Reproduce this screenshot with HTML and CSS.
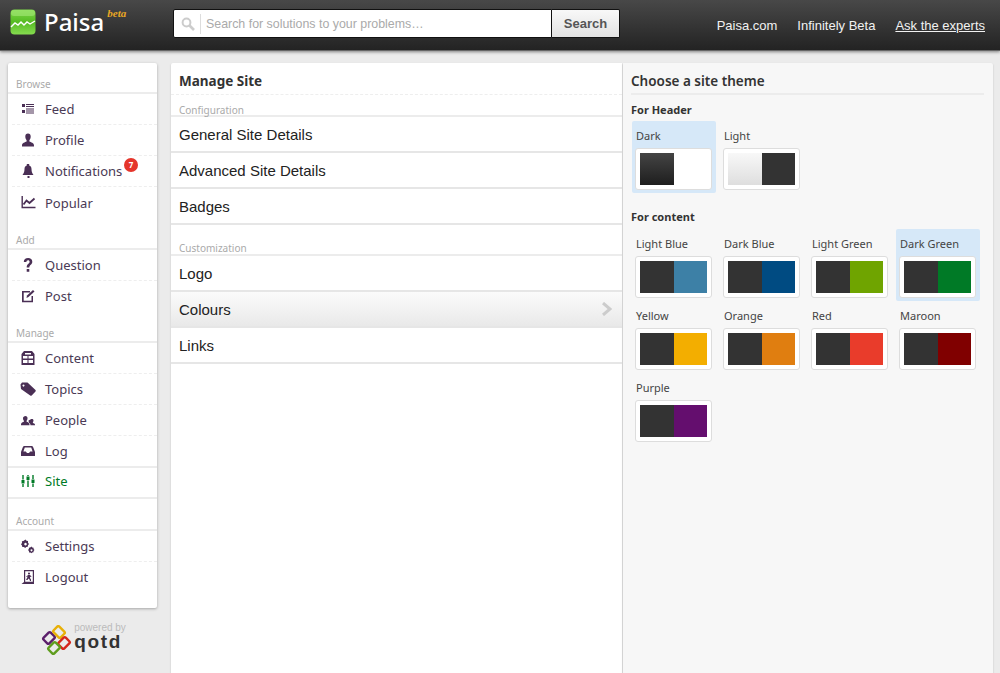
FILE: index.html
```html
<!DOCTYPE html>
<html lang="en">
<head>
  <meta charset="UTF-8">
  <title>Paisa - Manage Site</title>
  <link rel="stylesheet" href="styles.css">
</head>
<body>

  <header class="topbar">
    <a class="brand">
      <svg class="brand-icon" width="26" height="26" viewBox="0 0 26 26">
        <defs>
          <linearGradient id="logoGreen" x1="0" y1="0" x2="0" y2="1">
            <stop offset="0" stop-color="#7fd84a"/>
            <stop offset="0.5" stop-color="#55bb22"/>
            <stop offset="1" stop-color="#86dc50"/>
          </linearGradient>
        </defs>
        <rect x="0.5" y="0.5" width="25" height="25" rx="4" fill="url(#logoGreen)"/>
        <rect x="1" y="1" width="24" height="6" rx="3" fill="#a5e878" opacity="0.6"/>
        <path d="M1 18 L5 14 L8 16 L11 13 L14 16 L17 13 L20 15 L25 12" fill="none" stroke="#fff" stroke-width="1.4"/>
      </svg>
      <span class="brand-name">Paisa</span>
      <span class="brand-beta">beta</span>
    </a>
    <form class="search">
      <span class="search-field">
        <svg class="search-icon" width="14" height="14" viewBox="0 0 14 14">
          <circle cx="5.5" cy="5.5" r="3.9" fill="none" stroke="#ccc" stroke-width="2"/>
          <path d="M8.5 8.5 L13 13" stroke="#ccc" stroke-width="2.6"/>
        </svg>
        <input class="search-input" type="text" placeholder="Search for solutions to your problems…">
      </span>
      <button class="search-btn" type="button">Search</button>
    </form>
    <nav class="toplinks">
      <a>Paisa.com</a>
      <a>Infinitely Beta</a>
      <a class="underlined">Ask the experts</a>
    </nav>
  </header>

  <div class="page">
    <div class="left">
      <aside class="sidebar">
        <h4 class="nav-title">Browse</h4>
        <ul class="nav">
          <li><svg class="ico" viewBox="0 0 16 16"><path d="M2 3h3v3H2zM2 9h3v3H2zM6 3h8v1H6zM6 5h8v1H6zM6 7.500h8v1H6zM6 9.500h8v1H6zM6 11.500h8v1H6z"/></svg>Feed</li>
          <li><svg class="ico" viewBox="0 0 16 16"><path d="M8 1.500c1.800 0 2.700 1.300 2.700 3 0 1.600-.7 3-1.300 3.700v1.300c1.500.8 4.600 1.300 4.600 4v1H2v-1c0-2.700 3.100-3.200 4.600-4V8.200C6 7.500 5.300 6.100 5.300 4.500c0-1.700.9-3 2.700-3z"/></svg>Profile</li>
          <li><svg class="ico" viewBox="0 0 16 16"><path d="M7.300 1h1.400v1.600c1.500.5 2.300 1.800 2.300 3.400 0 3 .8 4.500 2 6H2c1.200-1.500 2-3 2-6 0-1.600.8-2.900 2.300-3.400V1zM7 13h2v2H7z" transform="translate(0.500 0)"/></svg>Notifications<span class="badge">7</span></li>
          <li><svg class="ico" viewBox="0 0 16 16"><path d="M1.500 2h1.400v10.800h12.600v1.400h-14z"/><path d="M3.500 10.500 L6.500 6.500 L9.500 9 L14.500 4.500" fill="none" stroke="#4a2f55" stroke-width="1.800"/></svg>Popular</li>
        </ul>
        <h4 class="nav-title">Add</h4>
        <ul class="nav">
          <li><svg class="ico" viewBox="0 0 16 16"><path d="M3.800 5c0-2.500 1.800-3.900 4.300-3.900 2.400 0 4.200 1.400 4.200 3.600 0 3-3 3.100-3 5.800H6.700c0-3.700 2.900-3.800 2.900-5.700 0-.9-.6-1.500-1.500-1.500-1.100 0-1.700.7-1.700 1.700zM6.700 12h2.600v2.700H6.700z"/></svg>Question</li>
          <li><svg class="ico" viewBox="0 0 16 16"><path d="M2 3h8v1.500H3.700v8.300h7.800V8H13v6.300H2z"/><path d="M7 7.500l6-5.500 1.500 1.500-6 5.500L6.500 10z"/></svg>Post</li>
        </ul>
        <h4 class="nav-title">Manage</h4>
        <ul class="nav">
          <li><svg class="ico" viewBox="0 0 16 16"><path fill-rule="evenodd" d="M4 1h8l2.500 3v11h-13V4zM3 6v2.500h4.500V6zM8.500 6v2.500H13V6zM3 10v3h4.500v-3zM8.500 10v3H13v-3zM5 3v1.500h6V3z"/></svg>Content</li>
          <li><svg class="ico" viewBox="0 0 16 16"><path fill-rule="evenodd" d="M.5 3.500L2 1.500h5.500l8 7.500c.4.400.4 1 0 1.400l-3.800 4c-.5.500-1.100.5-1.500.1L1 8zM3.500 3.500a1 1 0 1 0 .01 0z"/></svg>Topics</li>
          <li><svg class="ico" viewBox="0 0 16 16"><path d="M5.500 4c1.300 0 2 1 2 2.200 0 1-.4 2-.9 2.500v1c1 .5 2.900.8 2.900 2.700v.8H1v-.8c0-1.900 1.900-2.200 2.900-2.700v-1C3.400 8.200 3 7.200 3 6.200 3 5 4.200 4 5.500 4z"/><path d="M12 7c1 0 1.500.7 1.500 1.600 0 .7-.3 1.300-.6 1.700v.7c.7.300 2.100.5 2.100 1.800v.5h-4.500c0-1.300-.5-2-1.500-2.500v-.5c-.3-.4-.5-1-.5-1.700C10 7.700 11 7 12 7z"/></svg>People</li>
          <li><svg class="ico" viewBox="0 0 16 16"><path fill-rule="evenodd" d="M4.500 3h7c1 0 1.500.7 1.800 1.500L15 9v4H1V9l1.700-4.500C3 3.700 3.500 3 4.500 3zM4.800 4.500L3.400 8.500h2.400L7 10h2l1.200-1.500h2.400l-1.400-4z"/></svg>Log</li>
          <li class="current"><svg class="ico" viewBox="0 0 16 16"><path d="M2.300 2h1.400v4.500H2.300zM1.500 7h3v3.500h-3zM2.300 11h1.400v3H2.300zM7.300 2h1.400v1H7.300zM6.500 3.500h3V7h-3zM7.300 7.500h1.400V14H7.300zM12.300 2h1.400v4h-1.400zM11.500 6.500h3V10h-3zM12.300 10.500h1.400V14h-1.400z"/></svg>Site</li>
        </ul>
        <h4 class="nav-title">Account</h4>
        <ul class="nav">
          <li><svg class="ico" viewBox="0 0 16 16"><path fill-rule="evenodd" d="M5.500 1.500l1 1.200 1.500.3v1.800l1 1.200-1 1.300-.2 1.500-1.600.1-1 1.100-1.300-.9-1.600-.1-.3-1.600L1 6.200l1-1.300-.1-1.600 1.500-.4zM5.500 4.800a1.300 1.300 0 1 0 .01 0zM11.500 8.500l.8 1 1.300.2v1.300l.9 1-.9 1-.1 1.300-1.300.1-.8.9-1-.8-1.300-.1-.2-1.300-.9-1 .9-1v-1.300l1.300-.3zM11.500 11.200a1 1 0 1 0 .01 0z"/></svg>Settings</li>
          <li><svg class="ico" viewBox="0 0 16 16"><path fill-rule="evenodd" d="M4 1h10v14H1.500l2.500-2zM5.200 2.200v10.600h7.600V2.200zM9 3.500a1 1 0 1 1-.01 0zM8 6h2l1.500 1.500-.7.700L10 7.500V9l1 1.500v1.500h-1l-.5-1.500-1-1-1 1.500H6l1.500-3V7.200L7 8H6z"/></svg>Logout</li>
        </ul>
      </aside>

      <div class="powered">
        <svg class="qotd-mark" width="32" height="32" viewBox="0 0 32 32" fill="none" stroke-width="2.400">
          <rect x="3" y="9" width="10" height="8" rx="1.500" transform="rotate(-45 8 13)" stroke="#5c1f6b"/>
          <rect x="13" y="3" width="10" height="8" rx="1.500" transform="rotate(45 18 7)" stroke="#e8b008"/>
          <rect x="18" y="14" width="10" height="8" rx="1.500" transform="rotate(-45 23 18)" stroke="#d5261c"/>
          <rect x="8" y="19" width="10" height="8" rx="1.500" transform="rotate(-45 13 23)" stroke="#5f9d1e"/>
        </svg>
        <div class="powered-text">
          <span class="powered-by">powered by</span>
          <span class="qotd">qotd</span>
        </div>
      </div>
    </div>

    <main class="manage">
      <h3 class="panel-title">Manage Site</h3>
      <h4 class="menu-title">Configuration</h4>
      <ul class="menu">
        <li>General Site Details</li>
        <li>Advanced Site Details</li>
        <li>Badges</li>
      </ul>
      <h4 class="menu-title spaced">Customization</h4>
      <ul class="menu">
        <li>Logo</li>
        <li class="active">Colours
          <svg class="chevron" width="10" height="14" viewBox="0 0 10 14"><path d="M1 1 L8 7 L1 13" fill="none" stroke="#ccc" stroke-width="3"/></svg>
        </li>
        <li>Links</li>
      </ul>
    </main>

    <section class="themes">
      <h3 class="themes-title">Choose a site theme</h3>
      <h5 class="themes-sub">For Header</h5>
      <div class="theme-grid">
        <div class="theme selected">
          <div class="theme-name">Dark</div>
          <div class="swatch"><span class="grad-dark"></span><span class="white"></span></div>
        </div>
        <div class="theme">
          <div class="theme-name">Light</div>
          <div class="swatch"><span class="grad-light"></span><span class="base"></span></div>
        </div>
      </div>
      <h5 class="themes-sub content-sub">For content</h5>
      <div class="theme-grid">
        <div class="theme">
          <div class="theme-name">Light Blue</div>
          <div class="swatch"><span class="base"></span><span class="c-lightblue"></span></div>
        </div>
        <div class="theme">
          <div class="theme-name">Dark Blue</div>
          <div class="swatch"><span class="base"></span><span class="c-darkblue"></span></div>
        </div>
        <div class="theme">
          <div class="theme-name">Light Green</div>
          <div class="swatch"><span class="base"></span><span class="c-lightgreen"></span></div>
        </div>
        <div class="theme selected">
          <div class="theme-name">Dark Green</div>
          <div class="swatch"><span class="base"></span><span class="c-darkgreen"></span></div>
        </div>
        <div class="theme">
          <div class="theme-name">Yellow</div>
          <div class="swatch"><span class="base"></span><span class="c-yellow"></span></div>
        </div>
        <div class="theme">
          <div class="theme-name">Orange</div>
          <div class="swatch"><span class="base"></span><span class="c-orange"></span></div>
        </div>
        <div class="theme">
          <div class="theme-name">Red</div>
          <div class="swatch"><span class="base"></span><span class="c-red"></span></div>
        </div>
        <div class="theme">
          <div class="theme-name">Maroon</div>
          <div class="swatch"><span class="base"></span><span class="c-maroon"></span></div>
        </div>
        <div class="theme">
          <div class="theme-name">Purple</div>
          <div class="swatch"><span class="base"></span><span class="c-purple"></span></div>
        </div>
      </div>
    </section>
  </div>

</body>
</html>
```

FILE: styles.css
```css
* {
  box-sizing: border-box;
}
html, body {
  height: 100%;
}
body {
  margin: 0;
  background-color: #ebebeb;
  font-family: "Noto Sans", sans-serif;
  overflow: hidden;
}
ul {
  list-style: none;
  margin: 0;
  padding: 0;
}
h3, h4, h5 {
  margin: 0;
}

/* top bar */
.topbar {
  height: 51px;
  display: flex;
  align-items: flex-start;
  background: linear-gradient(#484848, #232323);
  box-shadow: 0 1px 3px rgba(0, 0, 0, 0.45);
  border-bottom: 1px solid #666;
}
.brand {
  display: flex;
  width: 173px;
  padding: 9px 0 0 10px;
  flex: none;
}
.brand-icon {
  flex: none;
}
.brand-name {
  margin-left: 8px;
  color: #fff;
  font-size: 24px;
  line-height: 26px;
  font-weight: 500;
}
.brand-beta {
  margin-left: 3px;
  color: #eaa824;
  font-family: "Liberation Serif", serif;
  font-style: italic;
  font-weight: bold;
  font-size: 11px;
  line-height: 9px;
}
.search {
  display: flex;
  width: 447px;
  height: 29px;
  margin-top: 9px;
  flex: none;
}
.search-field {
  flex: 1;
  display: flex;
  align-items: center;
  background: #fff;
  border: 1px solid #111;
  border-radius: 2px 0 0 2px;
}
.search-icon {
  margin-left: 7px;
  flex: none;
}
.search-input {
  flex: 1;
  height: 20px;
  margin-left: 5px;
  padding: 0 0 0 5px;
  border: none;
  border-left: 1px solid #ddd;
  outline: none;
  font-family: "Liberation Sans", sans-serif;
  font-size: 12.400px;
}
.search-input::placeholder {
  color: #aaa;
}
.search-btn {
  width: 68px;
  border: 1px solid #111;
  border-left: none;
  border-radius: 0 2px 2px 0;
  background: linear-gradient(#f8f8f8, #e2e2e2);
  color: #555;
  font-family: "Liberation Sans", sans-serif;
  font-weight: bold;
  font-size: 13px;
}
.toplinks {
  margin-left: auto;
  padding: 18px 15px 0 0;
  display: flex;
  gap: 20px;
  color: #f2f2f2;
  font-family: "Liberation Sans", sans-serif;
  font-size: 13px;
  line-height: 16px;
}
.underlined {
  text-decoration: underline;
}

/* columns */
.page {
  display: flex;
  height: 622px;
  padding: 12px 7px 0 8px;
}
.left {
  width: 149px;
  margin-right: 14px;
  flex: none;
}

/* sidebar */
.sidebar {
  background: #fff;
  border-radius: 2px;
  box-shadow: 0 1px 3px rgba(0, 0, 0, 0.3);
  padding: 14px 0 15px;
}
.nav-title {
  height: 17px;
  margin-top: 14.500px;
  padding-left: 8px;
  border-bottom: 2px solid #ececec;
  color: #aaa;
  font-size: 10px;
  line-height: 15px;
  font-weight: 400;
}
.nav-title:first-child {
  margin-top: 0;
}
.nav li {
  position: relative;
  display: flex;
  align-items: center;
  height: 31px;
  margin-left: 4px;
  padding-left: 33px;
  border-bottom: 1px dashed #eee;
  color: #4a3a55;
  font-size: 13px;
}
.nav li:last-child {
  border-bottom: none;
}
.nav .ico {
  position: absolute;
  left: 8px;
  top: 7px;
  width: 16px;
  height: 16px;
  fill: #4a2f55;
}
.nav .current {
  height: 33px;
  margin-left: 0;
  padding-left: 37px;
  padding-bottom: 3px;
  border-top: 2px solid #ececec;
  border-bottom: 2px solid #ececec;
  margin-top: -1px;
  color: #007a26;
}
.nav .current:last-child {
  border-bottom: 2px solid #ececec;
}
.nav .current .ico {
  left: 12px;
  top: 5px;
  fill: #007a26;
}
.badge {
  position: absolute;
  left: 112px;
  top: 2px;
  width: 14px;
  height: 14px;
  border-radius: 50%;
  background: #e5352b;
  color: #fff;
  font-size: 8px;
  font-weight: bold;
  line-height: 14px;
  text-align: center;
}

/* powered by */
.powered {
  display: flex;
  justify-content: center;
  margin-top: 14px;
  margin-left: 2px;
}
.qotd-mark {
  flex: none;
  margin-top: 3px;
}
.powered-text {
  margin-left: 1px;
}
.powered-by {
  display: block;
  color: #bbb;
  font-family: "Liberation Sans", sans-serif;
  font-size: 10px;
  line-height: 11px;
  text-align: right;
}
.qotd {
  display: block;
  color: #333;
  font-family: "Liberation Sans", sans-serif;
  font-size: 19px;
  font-weight: bold;
  line-height: 18px;
  letter-spacing: 1.700px;
}

/* manage site column */
.manage {
  width: 451px;
  flex: none;
  background: #fff;
  box-shadow: 0 1px 2px rgba(0, 0, 0, 0.2);
  border-radius: 2px 0 0 0;
}
.panel-title {
  height: 32px;
  padding: 0 8px;
  border-bottom: 1px dashed #eee;
  color: #333;
  font-size: 13.500px;
  line-height: 36px;
  font-weight: 700;
}
.menu-title {
  height: 22px;
  padding-left: 8px;
  border-bottom: 2px solid #ececec;
  color: #aaa;
  font-size: 10px;
  line-height: 30px;
  font-weight: 400;
}
.menu-title.spaced {
  height: 31px;
  line-height: 46px;
}
.menu li {
  position: relative;
  height: 36px;
  padding-left: 8px;
  border-bottom: 2px solid #e6e6e6;
  color: #222;
  font-family: "Liberation Sans", sans-serif;
  font-size: 15px;
  line-height: 35px;
}
.menu .active {
  background: linear-gradient(#fbfbfb, #e9e9e9);
}
.chevron {
  position: absolute;
  right: 10px;
  top: 10px;
}

/* theme column */
.themes {
  width: 370px;
  flex: none;
  background: #f7f7f7;
  box-shadow: 0 1px 2px rgba(0, 0, 0, 0.2);
  border-radius: 0 2px 0 0;
  padding: 0 9px 0 8px;
  margin-left: 1px;
}
.themes-title {
  height: 32px;
  border-bottom: 2px solid #ececec;
  color: #333;
  font-size: 13.500px;
  line-height: 36px;
  font-weight: 600;
}
.themes-sub {
  height: 26px;
  color: #333;
  font-size: 11px;
  line-height: 30px;
  font-weight: 700;
}
.content-sub {
  height: 36px;
  line-height: 48px;
}
.theme-grid {
  display: grid;
  grid-template-columns: repeat(4, 84px);
  column-gap: 4px;
  margin-left: 1px;
}
.theme {
  height: 72px;
  padding: 7px 4px 3px 3px;
  border-radius: 2px;
}
.theme.selected {
  background: #d6e8f8;
}
.theme-name {
  height: 16px;
  margin-bottom: 4px;
  padding-left: 1px;
  color: #444;
  font-size: 11px;
  line-height: 16px;
}
.swatch {
  display: flex;
  width: 77px;
  height: 42px;
  padding: 4px;
  background: #fff;
  border: 1px solid #ddd;
  border-radius: 3px;
}
.swatch span {
  flex: 1;
}
.base { background: #333; }
.white { background: #fff; }
.grad-dark { background: linear-gradient(#444, #1e1e1e); }
.grad-light { background: linear-gradient(#f8f8f8, #dedede); }
.c-lightblue { background: #3d80a6; }
.c-darkblue { background: #004b82; }
.c-lightgreen { background: #6fa400; }
.c-darkgreen { background: #007a26; }
.c-yellow { background: #f3ae00; }
.c-orange { background: #e07e10; }
.c-red { background: #e93c2b; }
.c-maroon { background: #800000; }
.c-purple { background: #640e6e; }
```
